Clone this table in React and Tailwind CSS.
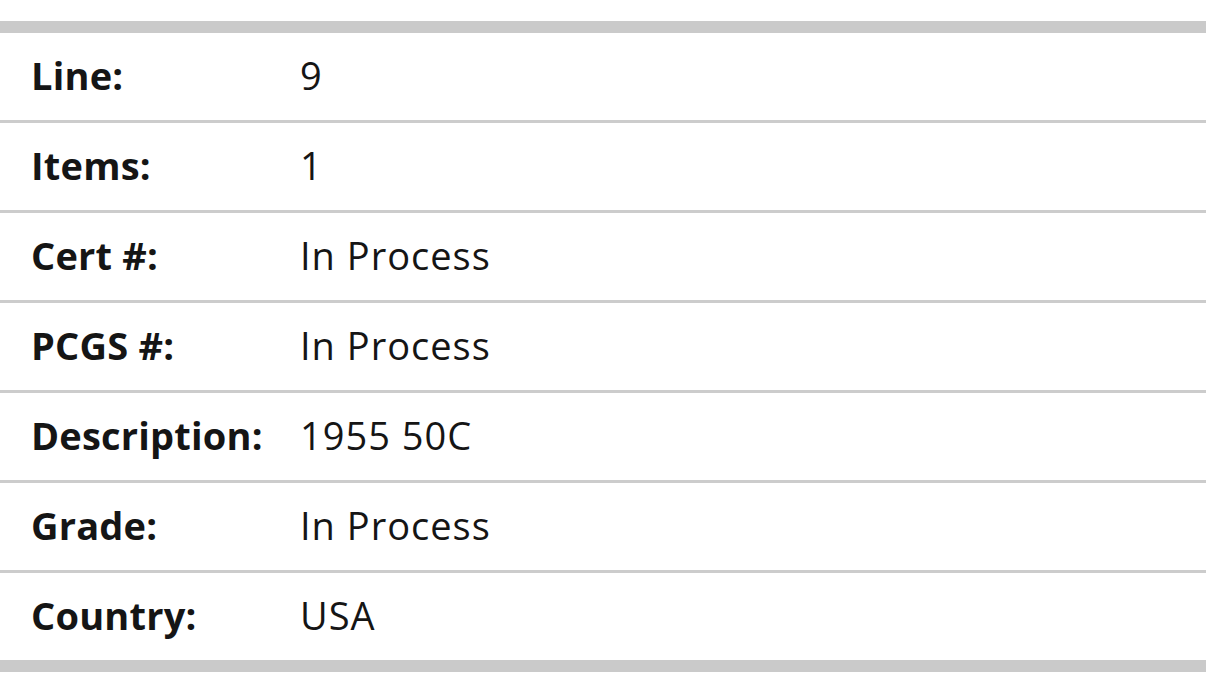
import React from 'react';

const rows = [
  ['Line:', '9'],
  ['Items:', '1'],
  ['Cert #:', 'In Process'],
  ['PCGS #:', 'In Process'],
  ['Description:', '1955 50C'],
  ['Grade:', 'In Process'],
  ['Country:', 'USA'],
];

export default function App() {
  return (
    <div className="min-h-[679px] bg-white pt-[21px] text-[#151515]" style={{ fontFamily: '"Open Sans", "DejaVu Sans", sans-serif' }}>
      <div className="border-y-[12px] border-[#cacaca]">
        {rows.map(([label, value], i) => (
          <div
            key={label}
            className={`flex h-[87px] items-center px-[31px] ${i > 0 ? 'border-t-[3px] border-[#cccccc] box-content' : ''}`}
          >
            <div className="mb-[3px] w-[269px] text-[38px] font-bold leading-none tracking-[0.2px]">{label}</div>
            <div className="mb-[3px] text-[38px] leading-none tracking-[1px]">{value}</div>
          </div>
        ))}
      </div>
    </div>
  );
}
